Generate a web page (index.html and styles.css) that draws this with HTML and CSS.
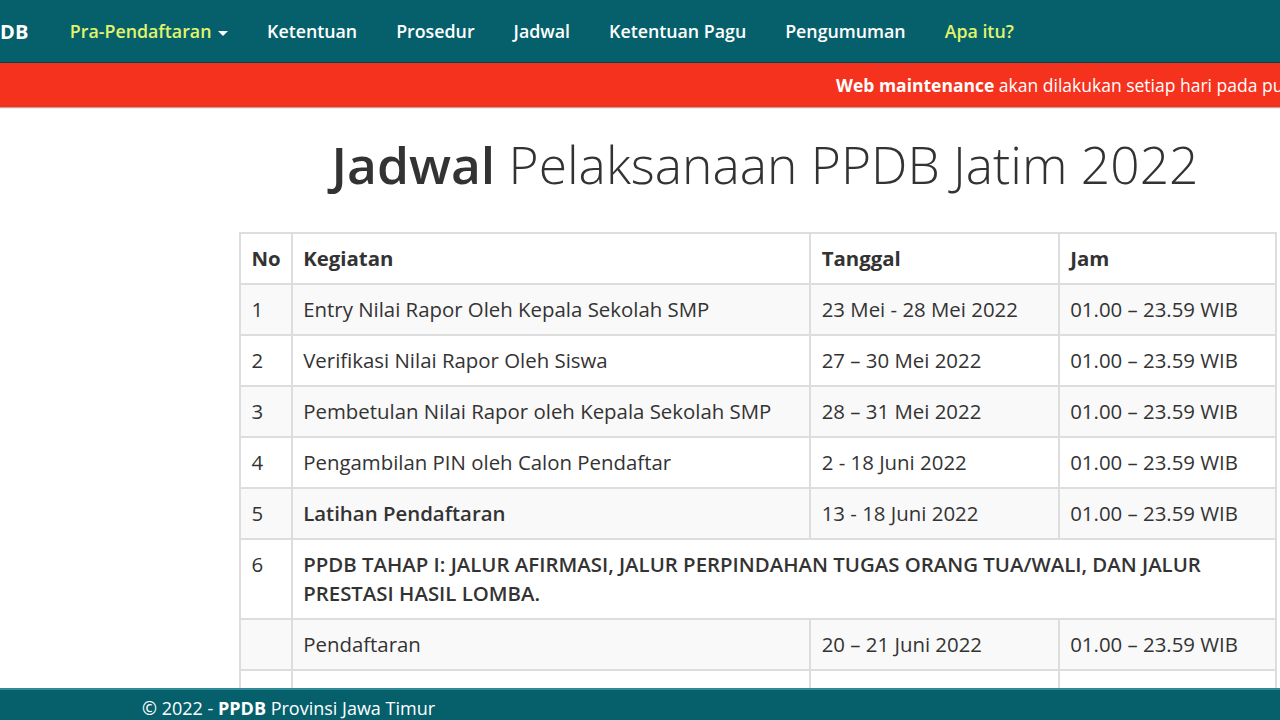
FILE: index.html
```html
<!DOCTYPE html>
<html lang="id">
<head>
<meta charset="utf-8">
<title>Jadwal PPDB Jatim 2022</title>
<link rel="stylesheet" href="styles.css">
</head>
<body>
<nav class="navbar">
  <div class="nav-inner">
    <a class="brand" href="#">PPDB</a>
    <ul class="nav-list">
      <li><a class="nav-link highlight" href="#">Pra-Pendaftaran <span class="caret"></span></a></li>
      <li><a class="nav-link" href="#">Ketentuan</a></li>
      <li><a class="nav-link" href="#">Prosedur</a></li>
      <li><a class="nav-link" href="#">Jadwal</a></li>
      <li><a class="nav-link" href="#">Ketentuan Pagu</a></li>
      <li><a class="nav-link" href="#">Pengumuman</a></li>
      <li><a class="nav-link highlight" href="#">Apa itu?</a></li>
    </ul>
  </div>
</nav>
<div class="notice">
  <div class="notice-text"><strong>Web maintenance</strong> akan dilakukan setiap hari pada pukul 00.00 – 01.00 WIB</div>
</div>
<main class="content">
  <h1 class="title"><strong>Jadwal</strong> Pelaksanaan PPDB Jatim 2022</h1>
  <table class="schedule">
    <thead>
      <tr><th class="c-no">No</th><th class="c-keg">Kegiatan</th><th class="c-tgl">Tanggal</th><th class="c-jam">Jam</th></tr>
    </thead>
    <tbody>
      <tr><td>1</td><td>Entry Nilai Rapor Oleh Kepala Sekolah SMP</td><td>23 Mei - 28 Mei 2022</td><td>01.00 – 23.59 WIB</td></tr>
      <tr><td>2</td><td>Verifikasi Nilai Rapor Oleh Siswa</td><td>27 – 30 Mei 2022</td><td>01.00 – 23.59 WIB</td></tr>
      <tr><td>3</td><td>Pembetulan Nilai Rapor oleh Kepala Sekolah SMP</td><td>28 – 31 Mei 2022</td><td>01.00 – 23.59 WIB</td></tr>
      <tr><td>4</td><td>Pengambilan PIN oleh Calon Pendaftar</td><td>2 - 18 Juni 2022</td><td>01.00 – 23.59 WIB</td></tr>
      <tr><td>5</td><td class="strong">Latihan Pendaftaran</td><td>13 - 18 Juni 2022</td><td>01.00 – 23.59 WIB</td></tr>
      <tr><td>6</td><td class="strong" colspan="3">PPDB TAHAP I: JALUR AFIRMASI, JALUR PERPINDAHAN TUGAS ORANG TUA/WALI, DAN JALUR PRESTASI HASIL LOMBA.</td></tr>
      <tr><td></td><td>Pendaftaran</td><td>20 – 21 Juni 2022</td><td>01.00 – 23.59 WIB</td></tr>
      <tr class="empty-row"><td></td><td></td><td></td><td></td></tr>
    </tbody>
  </table>
</main>
<footer class="footer">
  <p class="footer-text"><span>© 2022 - </span><strong>PPDB</strong><span> Provinsi Jawa Timur</span></p>
</footer>
</body>
</html>
```
FILE: styles.css
```css
html, body {
  margin: 0;
  padding: 0;
}
body {
  font-family: "Open Sans", "Liberation Sans", sans-serif;
  color: #333;
  background: #fff;
  overflow: hidden;
}
a { text-decoration: none; }

.navbar {
  background: #05606c;
  height: 62px;
  overflow: hidden;
  border-bottom: 1px solid #0b3f47;
}
.nav-inner {
  display: flex;
  align-items: center;
  height: 62px;
  margin-left: -25px;
}
.brand {
  color: #fff;
  font-weight: 700;
  font-size: 20px;
  padding-right: 22px;
}
.nav-list {
  list-style: none;
  display: flex;
  margin: 0;
  padding: 0;
}
.nav-link {
  display: block;
  color: #fff;
  font-weight: 600;
  font-size: 17.8px;
  padding: 0 19.5px;
  line-height: 62px;
}
.nav-link.highlight { color: #e2f46a; }
.caret {
  display: inline-block;
  width: 0;
  height: 0;
  border-left: 5px solid transparent;
  border-right: 5px solid transparent;
  border-top: 5px solid #fff;
  vertical-align: middle;
  margin-left: 2px;
}

.notice {
  background: #f5321d;
  height: 44px;
  overflow: hidden;
  border-bottom: 1px solid #c9a09a;
  box-shadow: 0 1px 1px rgba(0,0,0,0.08);
}
.notice-text {
  white-space: nowrap;
  color: #fff;
  font-size: 17.5px;
  line-height: 44px;
  padding-left: 836px;
}
.notice-text strong { font-weight: 700; }

.content {
  padding-left: 239px;
  width: 1038px;
}
.title {
  margin: 14px 0 0 0;
  text-align: center;
  font-size: 51.5px;
  font-weight: 300;
  line-height: 84px;
  color: #333;
  padding-left: 14px;
}
.title strong { font-weight: 600; }

.schedule {
  margin-top: 26px;
  width: 1038px;
  border-collapse: collapse;
  border: 2px solid #ddd;
  font-size: 20.4px;
  line-height: 29px;
}
.schedule th, .schedule td {
  border: 2px solid #ddd;
  padding: 10px 10px 10px 10.5px;
  text-align: left;
  vertical-align: top;
}
.schedule th { font-weight: 700; }
.c-no { width: 24px; }
.c-keg { width: 496px; }
.c-tgl { width: 226px; }
.schedule tbody tr:nth-child(odd) { background: #f9f9f9; }
.schedule td.strong { font-weight: 600; }
.empty-row td { height: 29px; }

.footer {
  position: fixed;
  left: 0;
  right: 0;
  bottom: 0;
  height: 30px;
  background: #05606c;
  border-top: 2px solid #2f8c96;
}
.footer-text {
  margin: 0;
  padding-left: 142px;
  color: #fff;
  font-size: 18px;
  line-height: 36px;
  white-space: nowrap;
}
.footer-text strong { font-weight: 700; }
```
